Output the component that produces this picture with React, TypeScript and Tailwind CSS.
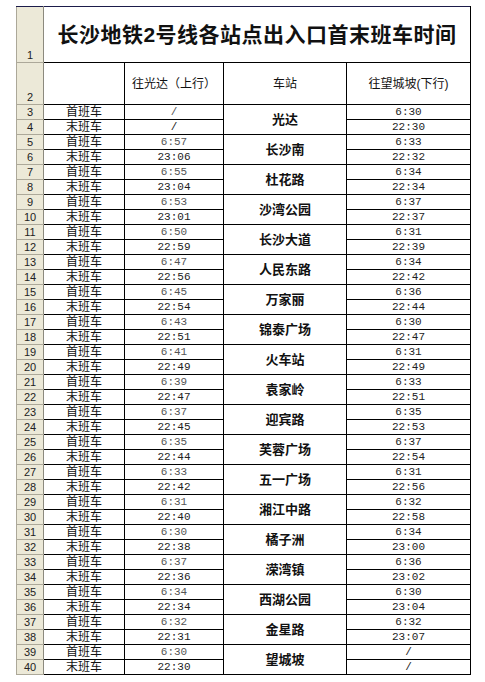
import React from "react";

const stations: [string, string, string, string, string][] = [
  ["光达", "/", "/", "6:30", "22:30"],
  ["长沙南", "6:57", "23:06", "6:33", "22:32"],
  ["杜花路", "6:55", "23:04", "6:34", "22:34"],
  ["沙湾公园", "6:53", "23:01", "6:37", "22:37"],
  ["长沙大道", "6:50", "22:59", "6:31", "22:39"],
  ["人民东路", "6:47", "22:56", "6:34", "22:42"],
  ["万家丽", "6:45", "22:54", "6:36", "22:44"],
  ["锦泰广场", "6:43", "22:51", "6:30", "22:47"],
  ["火车站", "6:41", "22:49", "6:31", "22:49"],
  ["袁家岭", "6:39", "22:47", "6:33", "22:51"],
  ["迎宾路", "6:37", "22:45", "6:35", "22:53"],
  ["芙蓉广场", "6:35", "22:44", "6:37", "22:54"],
  ["五一广场", "6:33", "22:42", "6:31", "22:56"],
  ["湘江中路", "6:31", "22:40", "6:32", "22:58"],
  ["橘子洲", "6:30", "22:38", "6:34", "23:00"],
  ["溁湾镇", "6:37", "22:36", "6:36", "23:02"],
  ["西湖公园", "6:34", "22:34", "6:30", "23:04"],
  ["金星路", "6:32", "22:31", "6:32", "23:07"],
  ["望城坡", "6:30", "22:30", "/", "/"],
];

const cjk = "font-['Liberation_Sans','Noto_Sans_CJK_SC',sans-serif]";
const mono = "font-['Liberation_Mono','Noto_Sans_CJK_SC',monospace]";

const rowHead =
  "bg-[#ece9d8] border border-[#aca899] border-r-[#8c8a7e] text-[11px] text-[#222] text-center align-bottom leading-[13px] font-['Liberation_Sans',sans-serif] p-0";
const cell = "border border-black p-0 text-center";

export default function App() {
  return (
    <div className="w-[485px] h-[682px] bg-white overflow-hidden pt-[6px] pl-[16px]">
      <table className="border-collapse table-fixed w-[454px]">
        <colgroup>
          <col className="w-[27px]" />
          <col className="w-[81px]" />
          <col className="w-[99px]" />
          <col className="w-[123px]" />
          <col className="w-[124px]" />
        </colgroup>
        <tbody>
          <tr className="h-[56px]">
            <td className={`${rowHead} border-t-[#1b1b4a]`}>1</td>
            <td
              colSpan={4}
              className={`${cell} border-t-[#1b1b4a] text-[21px] font-bold tracking-[0.5px] text-[#111] ${cjk}`}
            >
              长沙地铁2号线各站点出入口首末班车时间
            </td>
          </tr>
          <tr className="h-[42px]">
            <td className={rowHead}>2</td>
            <td className={cell}></td>
            <td className={`${cell} text-[12px] text-[#111] ${cjk}`}>往光达（上行）</td>
            <td className={`${cell} text-[12px] text-[#111] ${cjk}`}>车站</td>
            <td className={`${cell} text-[12px] text-[#111] ${cjk}`}>往望城坡(下行)</td>
          </tr>
          {stations.map(([name, upFirst, upLast, downFirst, downLast], i) => {
            const n = 3 + i * 2;
            return (
              <React.Fragment key={name}>
                <tr className="h-[15px]">
                  <td className={rowHead}>{n}</td>
                  <td className={`${cell} text-[12px] leading-[14px] text-[#111] ${cjk}`}>首班车</td>
                  <td className={`${cell} text-[11px] leading-[14px] text-[#555] ${mono}`}>{upFirst}</td>
                  <td
                    rowSpan={2}
                    className={`${cell} text-[13px] font-bold text-[#111] ${cjk}`}
                  >
                    {name}
                  </td>
                  <td className={`${cell} text-[11px] leading-[14px] text-[#222] ${mono}`}>{downFirst}</td>
                </tr>
                <tr className="h-[15px]">
                  <td className={rowHead}>{n + 1}</td>
                  <td className={`${cell} text-[12px] leading-[14px] text-[#111] ${cjk}`}>末班车</td>
                  <td className={`${cell} text-[11px] leading-[14px] text-[#222] ${mono}`}>{upLast}</td>
                  <td className={`${cell} text-[11px] leading-[14px] text-[#222] ${mono}`}>{downLast}</td>
                </tr>
              </React.Fragment>
            );
          })}
        </tbody>
      </table>
    </div>
  );
}
